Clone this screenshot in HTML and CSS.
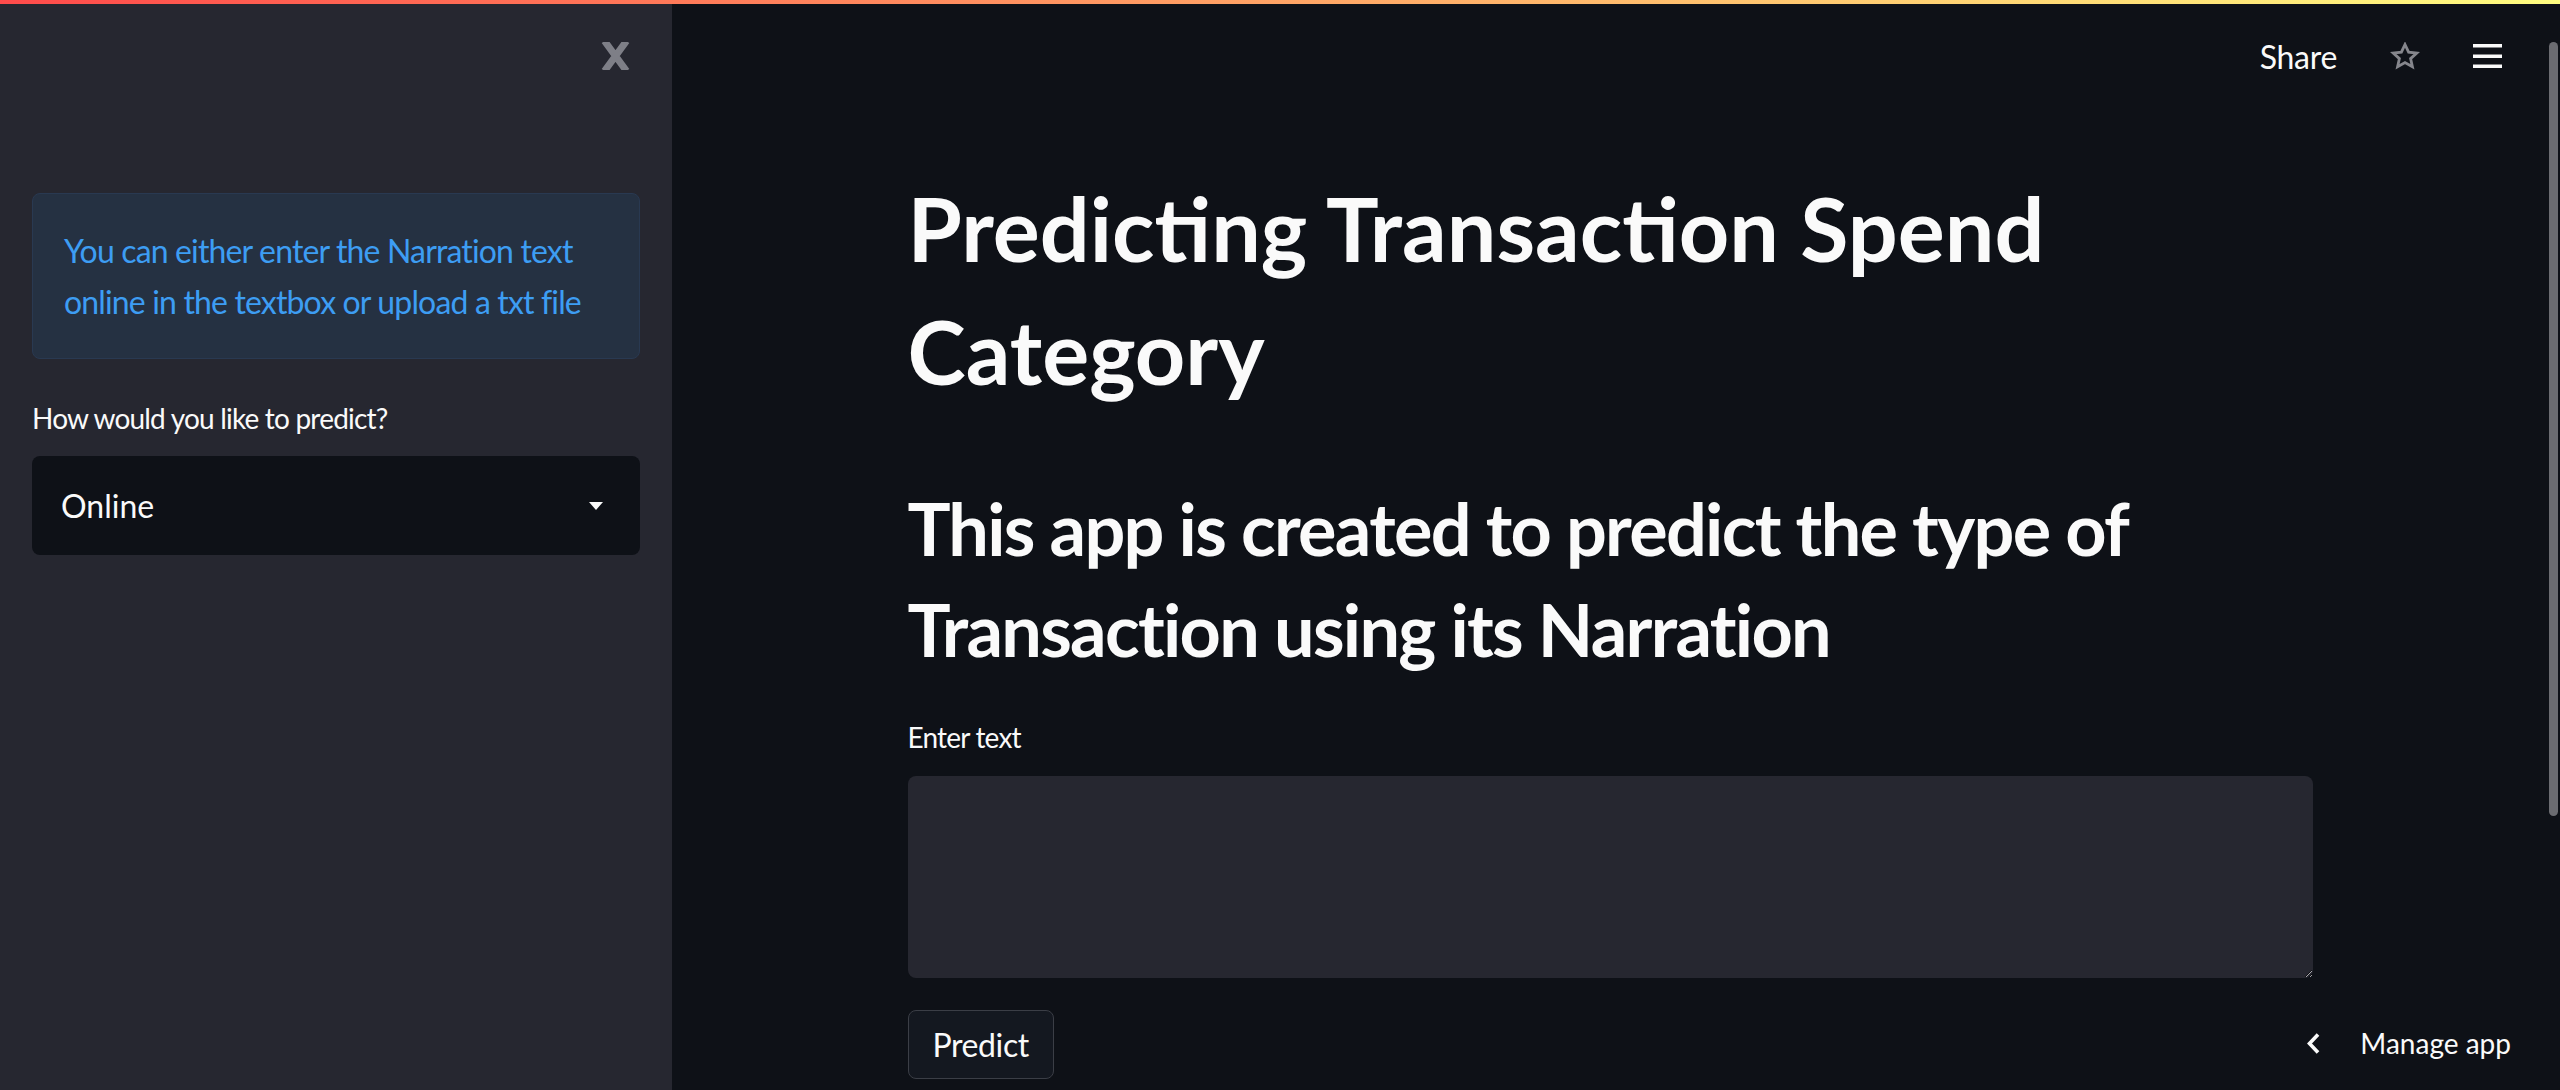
FILE: index.html
```html
<!DOCTYPE html>
<html lang="en">
<head>
<meta charset="utf-8">
<title>Predicting Transaction Spend Category</title>
<link rel="stylesheet" href="styles.css">
</head>
<body>
<div class="decoration"></div>
<div class="app">
  <aside class="sidebar">
    <div class="sidebar-head">
      <button class="close-btn" aria-label="Close sidebar">
        <svg width="29" height="28" viewBox="0 0 29 28"><path d="M3.5 -1 L25.5 29 M25.5 -1 L3.5 29" stroke="#7e7f87" stroke-width="7" fill="none"/></svg>
      </button>
    </div>
    <div class="sidebar-body">
      <div class="alert">You can either enter the Narration text online in the textbox or upload a txt file</div>
      <div class="widget">
        <label class="wlabel side-label">How would you like to predict?</label>
        <div class="select">
          <span class="select-value">Online</span>
          <svg class="select-arrow" width="14" height="8" viewBox="0 0 14 8"><polygon points="0,0 14,0 7,8" fill="#fafafa"/></svg>
        </div>
      </div>
    </div>
  </aside>
  <main class="main">
    <header class="toolbar">
      <span class="share">Share</span>
      <svg class="star" width="30" height="29" viewBox="0 0 30 29"><polygon points="15,2.5 18.6,10.2 26.8,11 20.6,16.6 22.4,24.8 15,20.6 7.6,24.8 9.4,16.6 3.2,11 11.4,10.2" fill="none" stroke="#85868c" stroke-width="2.8" stroke-linejoin="miter"/></svg>
      <svg class="menu" width="29" height="24" viewBox="0 0 29 24"><rect x="0" y="0" width="29" height="3.5" fill="#fafafa"/><rect x="0" y="10.5" width="29" height="3.5" fill="#fafafa"/><rect x="0" y="20.5" width="29" height="3.5" fill="#fafafa"/></svg>
    </header>
    <section class="block">
      <h1 class="title">Predicting Transaction Spend Category</h1>
      <h2 class="subtitle">This app is created to predict the type of Transaction using its Narration</h2>
      <label class="wlabel main-label" for="narration">Enter text</label>
      <textarea id="narration" class="textarea"></textarea>
      <button class="btn">Predict</button>
    </section>
    <div class="manage">
      <svg width="15" height="23" viewBox="0 0 15 23"><polyline points="12,2.5 3.5,11.5 12,20.5" fill="none" stroke="#fafafa" stroke-width="3.6"/></svg>
      <span>Manage app</span>
    </div>
  </main>
  <div class="scroll-track"><div class="scroll-thumb"></div></div>
</div>
</body>
</html>
```
FILE: styles.css
```css
* { box-sizing: border-box; }
html, body { margin: 0; padding: 0; }
body {
  background: #0e1117;
  color: #fafafa;
  font-family: Lato, "Open Sans", sans-serif;
  width: 2560px;
  height: 1090px;
  overflow: hidden;
}
.decoration {
  position: absolute;
  top: 0; left: 0; right: 0;
  height: 4px;
  background: linear-gradient(90deg, #ff4b4b, #fffd80);
  z-index: 5;
}
.app {
  display: flex;
  height: 1090px;
}
.sidebar {
  width: 672px;
  flex: none;
  background: #262730;
  padding: 0 32px;
}
.sidebar-head {
  height: 193px;
  display: flex;
  justify-content: flex-end;
  align-items: flex-start;
  padding: 42px 10px 0 0;
}
.close-btn {
  background: none;
  border: none;
  padding: 0;
  width: 29px;
  height: 28px;
  display: block;
}
.close-btn svg { display: block; }
.sidebar-body {
  display: flex;
  flex-direction: column;
  gap: 32px;
}
.alert {
  background: #253142;
  border: 1px solid #293951;
  border-radius: 8px;
  padding: 31px 31px;
  color: #3d9df3;
  font-size: 32px;
  line-height: 51.2px;
  letter-spacing: -0.85px;
}
.wlabel {
  display: block;
  font-size: 28px;
  line-height: 44.8px;
  color: #fafafa;
  letter-spacing: -0.8px;
}
.side-label {
  padding-top: 5px;
  margin-bottom: 15px;
}
.select {
  height: 99px;
  background: #0e1117;
  border-radius: 8px;
  display: flex;
  align-items: center;
  justify-content: space-between;
  padding: 0 37px 0 29px;
  font-size: 32px;
}
.select-arrow { display: block; }
.main {
  flex: 1;
  position: relative;
  display: flex;
  flex-direction: column;
}
.toolbar {
  height: 112px;
  display: flex;
  justify-content: flex-end;
  align-items: center;
  padding-right: 46px;
}
.share {
  font-size: 32px;
  margin-right: 53px;
  letter-spacing: -0.3px;
}
.star { display: block; margin-right: 53px; }
.menu { display: block; }
.block {
  width: 1405px;
  margin: 0 auto;
  padding-top: 55px;
  display: flex;
  flex-direction: column;
  align-items: flex-start;
}
.title {
  margin: 0;
  font-size: 88px;
  line-height: 123.2px;
  font-weight: 700;
  letter-spacing: 0;
}
.subtitle {
  margin: 65px 0 0 0;
  font-size: 72px;
  line-height: 100.8px;
  font-weight: 700;
  letter-spacing: -1.7px;
}
.main-label {
  margin-top: 35px;
  margin-bottom: 16px;
}
.textarea {
  width: 100%;
  height: 202px;
  background: #262730;
  border: none;
  border-radius: 8px;
  resize: vertical;
  color-scheme: dark;
  color: #fafafa;
  font-family: inherit;
  font-size: 32px;
  padding: 16px 24px;
  outline: none;
}
.btn {
  margin-top: 32px;
  height: 69px;
  padding: 0 24px;
  background: #141820;
  border: 1px solid #3b3e46;
  border-radius: 8px;
  color: #fafafa;
  font-family: inherit;
  font-size: 32px;
  letter-spacing: -0.4px;
}
.manage {
  position: absolute;
  right: 37px;
  bottom: 30px;
  display: flex;
  align-items: center;
  gap: 39px;
  font-size: 28px;
  color: #fafafa;
}
.manage svg { display: block; }
.scroll-track {
  width: 12px;
  flex: none;
  padding: 42px 2px 0 1px;
}
.scroll-thumb {
  height: 774px;
  background: #6b6c71;
  border-radius: 5px;
}
```
